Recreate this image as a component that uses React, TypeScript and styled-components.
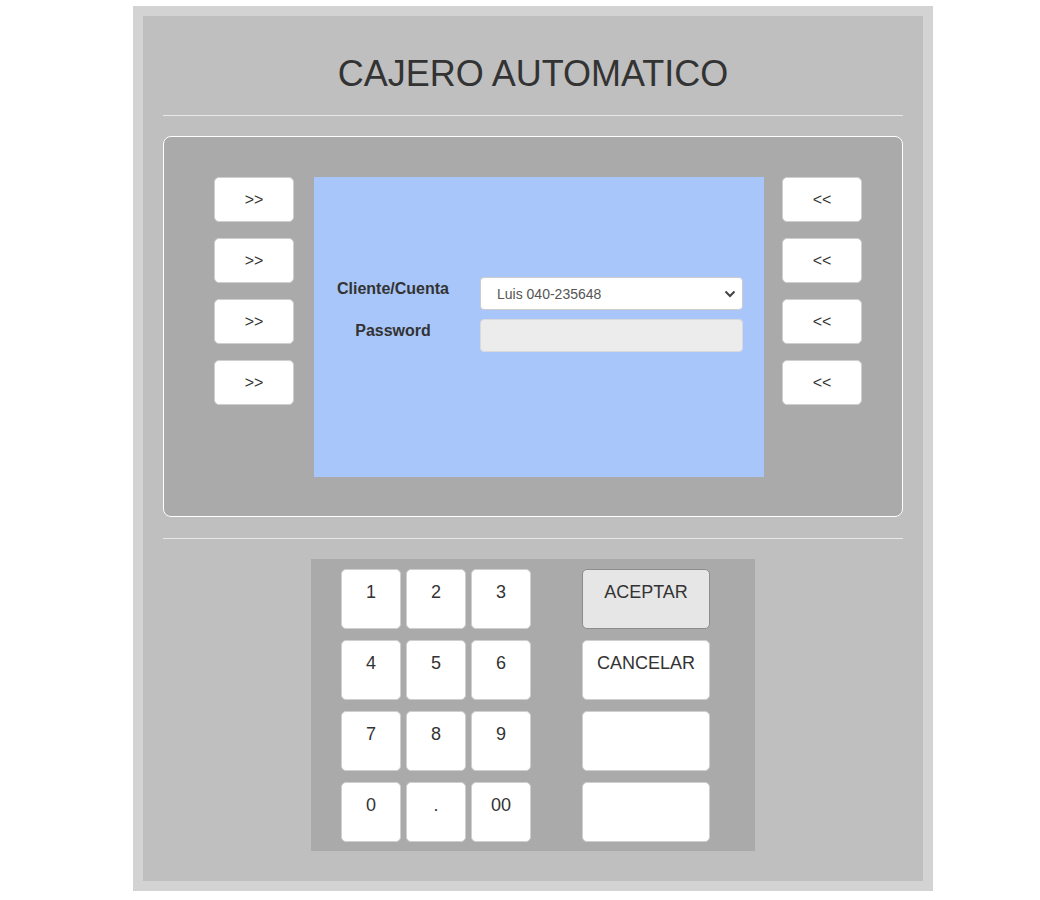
import { FC } from "react"
import styled, { createGlobalStyle } from "styled-components"

const GlobalStyle = createGlobalStyle`
  body {
    margin: 0;
    font-family: "Liberation Sans", Arial, sans-serif;
    background: #fff;
  }
`

const Frame = styled.div`
  width: 740px;
  margin: 6px 0 0 133px;
  border: 10px solid #d3d3d3;
  background: #bfbfbf;
  padding: 37px 20px 30px;
`

const Title = styled.h1`
  margin: 0;
  font-size: 36px;
  font-weight: 400;
  line-height: 41px;
  text-align: center;
  color: #333;
`

const Rule = styled.hr<{ top: number }>`
  margin: ${({ top }) => top}px 0 20px;
  border: 0;
  border-top: 1px solid #e8e8e8;
  height: 0;
`

const Console = styled.div`
  display: flex;
  align-items: flex-start;
  border: 1px solid #fff;
  border-radius: 8px;
  background: #aaaaaa;
  padding: 40px 40px 39px 50px;
`

const SideColumn = styled.div`
  display: flex;
  flex-direction: column;
  gap: 16px;
`

const SideButton = styled.button`
  width: 80px;
  height: 45px;
  background: #fff;
  border: 1px solid #cfcfcf;
  border-radius: 5px;
  font-family: inherit;
  font-size: 16px;
  color: #333;
  cursor: pointer;
`

const Screen = styled.div`
  width: 450px;
  height: 300px;
  margin: 0 18px 0 20px;
  background: #a8c6fa;
  box-sizing: border-box;
  padding: 100px 0 0 19px;
`

const LoginForm = styled.div`
  display: grid;
  grid-template-columns: 120px 263px;
  column-gap: 27px;
  row-gap: 9px;
`

const FieldLabel = styled.label`
  padding-top: 3px;
  font-size: 16px;
  font-weight: 700;
  line-height: 18px;
  color: #333;
  text-align: center;
  white-space: nowrap;
`

const SelectWrap = styled.div`
  position: relative;
  height: 33px;
`

const AccountSelect = styled.select`
  appearance: none;
  width: 100%;
  height: 33px;
  background: #fff;
  border: 1px solid #ccc;
  border-radius: 4px;
  padding: 0 30px 0 16px;
  font-family: inherit;
  font-size: 14px;
  color: #555;
`

const Chevron = styled.svg`
  position: absolute;
  right: 7px;
  top: 13px;
  pointer-events: none;
`

const PasswordInput = styled.input`
  height: 33px;
  box-sizing: border-box;
  background: #ececec;
  border: 1px solid #dadada;
  border-radius: 4px;
  padding: 0 12px;
`

const Keypad = styled.div`
  width: 444px;
  margin: 0 auto;
  box-sizing: border-box;
  display: flex;
  gap: 51px;
  background: #aaaaaa;
  padding: 10px 45px 9px 30px;
`

const Digits = styled.div`
  display: grid;
  grid-template-columns: repeat(3, 60px);
  grid-auto-rows: 60px;
  column-gap: 5px;
  row-gap: 11px;
`

const Actions = styled.div`
  display: flex;
  flex-direction: column;
  gap: 11px;
`

const Key = styled.button<{ wide?: boolean; active?: boolean }>`
  width: ${({ wide }) => (wide ? "128px" : "60px")};
  height: 60px;
  display: flex;
  justify-content: center;
  align-items: flex-start;
  padding: 12px 0 0;
  background: ${({ active }) => (active ? "#e6e6e6" : "#fff")};
  border: 1px solid ${({ active }) => (active ? "#8c8c8c" : "#cfcfcf")};
  border-radius: 5px;
  font-family: inherit;
  font-size: 18px;
  line-height: 20px;
  color: #333;
  cursor: pointer;
`

const digits = ["1", "2", "3", "4", "5", "6", "7", "8", "9", "0", ".", "00"]
const actions = ["ACEPTAR", "CANCELAR", "", ""]

const App: FC = () => {
  return (
    <>
      <GlobalStyle />
      <Frame>
        <Title>CAJERO AUTOMATICO</Title>
        <Rule top={21} />
        <Console>
          <SideColumn>
            {[0, 1, 2, 3].map((i) => (
              <SideButton key={i}>&gt;&gt;</SideButton>
            ))}
          </SideColumn>
          <Screen>
            <LoginForm>
              <FieldLabel htmlFor="cuenta">Cliente/Cuenta</FieldLabel>
              <SelectWrap>
                <AccountSelect id="cuenta" defaultValue="luis">
                  <option value="luis">Luis 040-235648</option>
                </AccountSelect>
                <Chevron width="12" height="8" viewBox="0 0 12 8">
                  <path d="M1.5 1.5 L6 6 L10.5 1.5" fill="none" stroke="#444" strokeWidth="2" />
                </Chevron>
              </SelectWrap>
              <FieldLabel htmlFor="pass">Password</FieldLabel>
              <PasswordInput id="pass" type="password" />
            </LoginForm>
          </Screen>
          <SideColumn>
            {[0, 1, 2, 3].map((i) => (
              <SideButton key={i}>&lt;&lt;</SideButton>
            ))}
          </SideColumn>
        </Console>
        <Rule top={21} />
        <Keypad>
          <Digits>
            {digits.map((d) => (
              <Key key={d}>{d}</Key>
            ))}
          </Digits>
          <Actions>
            {actions.map((a, i) => (
              <Key key={i} wide active={i === 0}>
                {a}
              </Key>
            ))}
          </Actions>
        </Keypad>
      </Frame>
    </>
  )
}

export default App
